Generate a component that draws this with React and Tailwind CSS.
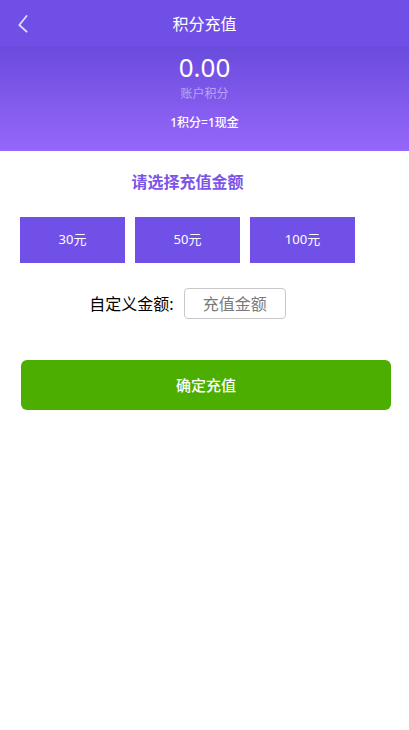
export default function App() {
  const font = { fontFamily: '"Noto Sans", "Noto Sans CJK SC", sans-serif' };
  return (
    <div className="w-[409px] min-h-[730px] bg-white" style={font}>
      <div className="relative h-[46px] bg-[#704fe6] flex items-center justify-center">
        <svg className="absolute left-[12px] top-[12px]" width="22" height="24" viewBox="0 0 22 24">
          <polyline points="14.6,4 7.3,13 14.6,19.7" fill="none" stroke="rgba(255,255,255,0.8)" strokeWidth="1.8" strokeLinecap="round" strokeLinejoin="round" />
        </svg>
        <span className="text-white text-[16px] leading-[22px] mt-[2px]">积分充值</span>
      </div>
      <div className="bg-gradient-to-b from-[#6a4bdc] to-[#9667fb] pt-[6px] pb-[20px] flex flex-col items-center">
        <div className="text-white text-[26px] leading-[30px]">0.00</div>
        <div className="mt-[4px] text-[12px] leading-[16px] text-[#b9a6f2]">账户积分</div>
        <div className="mt-[13px] text-[12px] leading-[16px] text-white font-medium">1积分=1现金</div>
      </div>
      <div className="w-[375px]">
        <div className="mt-[19px] text-center text-[16px] leading-[24px] font-bold text-[#7b55e8]">请选择充值金额</div>
        <div className="mt-[23px] pl-[20px] flex gap-[10px]">
          {["30元", "50元", "100元"].map((t) => (
            <div key={t} className="w-[105px] h-[46px] bg-[#7150e8] text-white text-[13px] flex items-center justify-center">
              {t}
            </div>
          ))}
        </div>
        <div className="mt-[25px] h-[31px] flex items-center justify-center gap-[10px]">
          <span className="text-[16px] text-black">自定义金额:</span>
          <div className="w-[102px] h-[31px] border border-[#c8c8c8] rounded-[4px] flex items-center justify-center text-[16px] text-[#7a7a7a]">
            充值金额
          </div>
        </div>
      </div>
      <div className="mt-[41px] ml-[21px] w-[370px] h-[50px] rounded-[6px] bg-[#4cae00] flex items-center justify-center text-white text-[15px] font-medium">
        确定充值
      </div>
    </div>
  );
}
